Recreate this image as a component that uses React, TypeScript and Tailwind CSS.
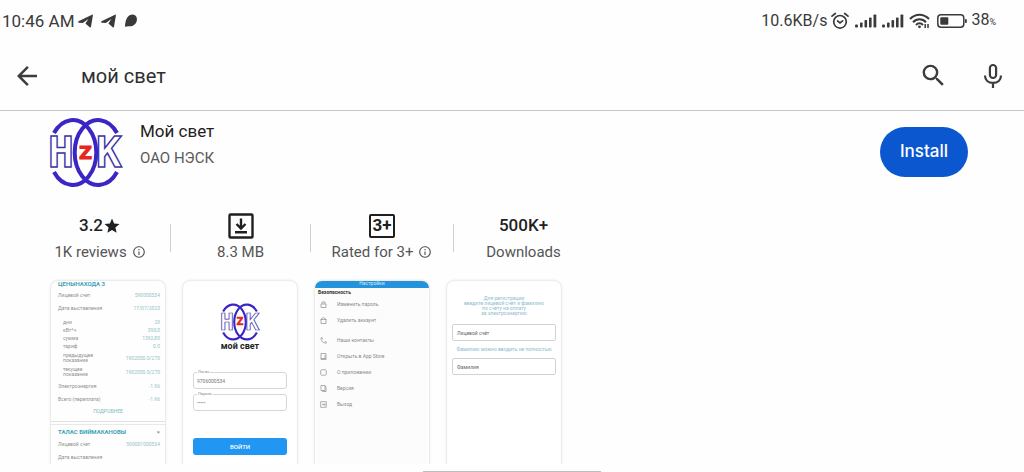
import React from "react";
import { MdArrowBack, MdInfoOutline, MdSearch, MdStar } from "react-icons/md";

function Logo({ className }: { className: string }) {
  return (
    <svg viewBox="0 0 71 71" className={`overflow-visible ${className}`} role="img" aria-label="НЭСК">
      <g fill="#fff" stroke="#3b32a8" strokeWidth="1.4" fontFamily="'DejaVu Sans Mono', monospace" fontWeight="700" fontSize="43">
        <text x="-2" y="50">H</text>
        <text x="46" y="50">K</text>
      </g>
      <g fill="none" stroke="#3b25c4" strokeWidth="4">
        <path d="M4 16A23.5 32.5 0 1 1 4 55" />
        <path d="M67 16A23.5 32.5 0 1 0 67 55" />
      </g>
      <text x="35.5" y="41.5" textAnchor="middle" fill="#e5261f" stroke="#e5261f" strokeWidth="1" fontFamily="'DejaVu Sans', sans-serif" fontWeight="700" fontSize="18">Z</text>
    </svg>
  );
}

function Plane() {
  return (
    <svg viewBox="0 0 15 14" className="h-[14px] w-[15px]" fill="#3a3a3a" aria-hidden="true">
      <path d="M0.200 8.200C0 7.600.3 7.300 1 7L14 .7c.7-.3 1 .1.9.8L13 12.800c-.2.800-.7 1-1.300.5L7.400 9.600l3-4.600-5.600 4-3.900-.3c-.4 0-.6-.2-.7-.5z" />
    </svg>
  );
}

function Signal() {
  return (
    <svg viewBox="0 0 22 14" className="h-[14px] w-[22px]" fill="#3a3a3a" aria-hidden="true">
      <rect x="0" y="10.500" width="3" height="3" rx="1" />
      <rect x="5" y="8.500" width="2.600" height="5" rx=".8" />
      <rect x="9.500" y="6" width="2.600" height="7.500" rx=".8" />
      <rect x="14" y="3.500" width="2.600" height="10" rx=".8" />
      <rect x="18.500" y=".5" width="2.800" height="13" rx=".8" />
    </svg>
  );
}

function StatusBar() {
  return (
    <div className="flex h-[41px] items-center justify-between pr-7 pl-[2px] text-[17px] leading-5 text-[#3a3a3a]">
      <div className="flex items-center">
        <span>10:46 AM</span>
        <span className="ml-1 flex items-center gap-2">
          <Plane />
          <Plane />
          <svg viewBox="0 0 14 14" className="h-[14px] w-[14px]" fill="#3a3a3a" aria-hidden="true">
            <path d="M1 12.500C1.300 7 3 1 8 .6c4-.2 5.500 3 4.800 6.200C12 10.800 8 13 4.500 12.200 3 12 2 13.200 1 12.500z" />
          </svg>
        </span>
      </div>
      <div className="flex items-center">
        <span className="text-[16px]">10.6KB/s</span>
        <svg viewBox="0 0 18 18" className="ml-1 h-[18px] w-[18px]" fill="none" stroke="#3a3a3a" strokeWidth="1.700" strokeLinecap="round" aria-hidden="true">
          <circle cx="9" cy="9.800" r="6.300" />
          <path d="M1 4.200 4.300 1.500M17 4.200 13.700 1.500M6.600 9l2.400 2 2.600-2.200" />
        </svg>
        <span className="ml-[6px] flex gap-[5px]">
          <Signal />
          <Signal />
        </span>
        <svg viewBox="0 0 21 16" className="ml-[5px] h-4 w-[21px]" fill="none" stroke="#3a3a3a" strokeWidth="2" aria-hidden="true">
          <path d="M1 6C6.500.2 14.500.2 20 6M4 9.200c3.800-4 9.200-4 13 0M7 12c2-2.200 5-2.200 7 0" />
          <circle cx="10.500" cy="13.800" r="1.400" fill="#3a3a3a" stroke="none" />
          <path d="M16.200 11v4M19 11v4" strokeWidth="1.500" />
        </svg>
        <svg viewBox="0 0 30 14" className="ml-[7px] h-[14px] w-[30px]" aria-hidden="true">
          <rect x=".8" y=".8" width="26" height="12.400" rx="3.200" fill="none" stroke="#3a3a3a" strokeWidth="1.500" />
          <rect x="3.300" y="3.300" width="8" height="7.400" rx="1" fill="#3a3a3a" />
          <rect x="28" y="5" width="1.800" height="4" rx=".8" fill="#3a3a3a" />
        </svg>
        <span className="ml-1 flex items-baseline text-[16px]">
          38<span className="text-[9px]">%</span>
        </span>
      </div>
    </div>
  );
}

function SearchBar() {
  return (
    <header className="flex h-[70px] items-center border-b border-[#c8c8c8] pl-3 pr-[18px] text-[#3c3c3c]">
      <button aria-label="Back" className="shrink-0">
        <MdArrowBack size={30} />
      </button>
      <input
        aria-label="Search apps"
        defaultValue="мой свет"
        className="ml-[39px] min-w-0 flex-1 bg-transparent text-[20px] leading-6 text-[#2f2f2f] outline-none"
      />
      <button aria-label="Search" className="shrink-0">
        <MdSearch size={29} />
      </button>
      <button aria-label="Voice search" className="ml-8 shrink-0">
        <svg viewBox="0 0 26 26" className="h-[26px] w-[26px]" fill="none" stroke="#3c3c3c" strokeWidth="2.200">
          <rect x="9.900" y="2" width="6.200" height="13" rx="3.100" />
          <path d="M5 12.500c0 4.600 3.400 7.400 8 7.400s8-2.800 8-7.400M13 20v5" />
        </svg>
      </button>
    </header>
  );
}

function Stat({ top, label, info, className }: { top: React.ReactNode; label: string; info?: boolean; className: string }) {
  return (
    <li className={`flex flex-col items-center ${className}`}>
      <div className="flex h-7 items-center text-[17px] font-medium text-[#1f1f1f]">{top}</div>
      <div className="flex h-6 items-center gap-[5px] text-[15px] text-[#555]">
        {label}
        {info && <MdInfoOutline size={14} aria-label="More information" />}
      </div>
    </li>
  );
}

function Stats() {
  return (
    <ul className="ml-[30px] flex">
      <Stat className="w-[140px]" top={<>3.2<MdStar size={18} aria-hidden="true" /></>} label="1K reviews" info />
      <li aria-hidden="true" className="mt-3 h-7 w-px bg-[#cfcfcf]" />
      <Stat
        className="w-[139px]"
        top={
          <svg viewBox="0 0 26 26" className="h-[26px] w-[26px]" fill="none" stroke="#1f1f1f" strokeWidth="2.400" aria-hidden="true">
            <rect x="1.500" y="1.500" width="23" height="23" rx="1" />
            <path d="M13 5.500v9.500M8.500 11l4.500 4.500 4.500-4.500M7 19.300h12" />
          </svg>
        }
        label="8.3 MB"
      />
      <li aria-hidden="true" className="mt-3 h-7 w-px bg-[#cfcfcf]" />
      <Stat
        className="w-[142px]"
        top={<span className="flex h-6 w-[26px] items-center justify-center rounded-[2px] border-2 border-[#1f1f1f] font-bold">3+</span>}
        label="Rated for 3+"
        info
      />
      <li aria-hidden="true" className="mt-3 h-7 w-px bg-[#cfcfcf]" />
      <Stat className="w-[139px]" top="500K+" label="Downloads" />
    </ul>
  );
}

function Shot({ children, className = "" }: { children: React.ReactNode; className?: string }) {
  return (
    <article className={`h-[200px] w-[114px] shrink-0 overflow-hidden rounded-[7px] text-[5px] leading-[5px] shadow-[0_0_3px_rgba(0,0,0,0.2)] ${className}`}>
      {children}
    </article>
  );
}

function Line({ label, value, className = "h-[13px] pl-[7px]" }: { label: string; value: string; className?: string }) {
  return (
    <div className={`flex items-center justify-between pr-[5px] ${className}`}>
      <span>{label}</span>
      <span className="text-[#93c3c3]">{value}</span>
    </div>
  );
}

function BillShot() {
  const sub = "h-2 pl-3";
  const tall = "h-[14px] pl-3";
  return (
    <Shot className="text-[#909090]">
      <h3 className="h-2 pl-[7px] text-[6px] font-bold text-[#3fa3b5]">ЦЕНЫНАХОДА 3</h3>
      <Line label="Лицевой счет" value="590000534" />
      <Line label="Дата выставления" value="17/07/2023" />
      <div className="pt-[3px] pb-px">
        <Line className={sub} label="дни" value="29" />
        <Line className={sub} label="кВт*ч" value="390,0" />
        <Line className={sub} label="сумма" value="1392,80" />
        <Line className={sub} label="тариф" value="0.0" />
      </div>
      <div className="pb-px [&_span:first-child]:w-[32px]">
        <Line className={tall} label="предыдущее показание" value="1902050.0/270" />
        <Line className={tall} label="текущее показание" value="1902050.0/270" />
      </div>
      <Line label="Электроэнергия" value="-1.96" />
      <Line label="Всего (переплата)" value="-1.96" />
      <div className="flex h-4 justify-center border-b border-[#e2e2e2] pt-[3px] text-[#7bbcc4]">ПОДРОБНЕЕ</div>
      <div className="mt-[2px] border-t border-[#e8e8e8]">
        <div className="flex h-[13px] items-center justify-between pr-[5px] pl-[7px] text-[6px] font-bold text-[#3fa3b5]">
          ТАЛАС БИЙМАКАНОВЫ <span className="font-normal text-[#777]">×</span>
        </div>
        <Line label="Лицевой счет" value="590001000534" />
        <Line label="Дата выставления" value="" />
      </div>
    </Shot>
  );
}

function LoginField({ label, value, type }: { label: string; value: string; type: string }) {
  return (
    <label className="relative block">
      <span className="absolute -top-[2px] left-1 bg-white px-px text-[4px] leading-[4px]">{label}</span>
      <input type={type} defaultValue={value} className="block h-[17px] w-full rounded-[3px] border border-[#d6d6d6] px-[3px] text-[5px] text-[#777] outline-none" />
    </label>
  );
}

function LoginShot() {
  return (
    <Shot className="bg-white text-[#888]">
      <div className="flex flex-col items-center pt-[22px]">
        <Logo className="h-[38px] w-[38px]" />
        <h3 className="text-[9px] leading-[10px] font-bold text-[#222]">мой свет</h3>
      </div>
      <div className="mx-[10px] mt-[21px] flex flex-col gap-[5px]">
        <LoginField label="Логин" value="9706000534" type="text" />
        <LoginField label="Пароль" value="12345" type="password" />
        <button className="mt-[22px] h-[17px] rounded-[3px] bg-[#2196f3] text-[6px] font-medium text-white">ВОЙТИ</button>
      </div>
    </Shot>
  );
}

const glyphs = {
  lock: "M1 3h5v3.500H1zM2 3V1h3v2",
  trash: "M1 2.500h5V6.500H1zM.5 2.500 3.500.5l3 2",
  phone: "M1 .8C1 4 3 6 6.200 6.200V4.800L5 4.400M1 .8h1.200L2.600 2",
  phoneApp: "M1 .5h5v6H1zM5 2v3M1 5.500h5",
  about: "M1.500.8h4l.8.700v4l-.8.700h-4L.7 5.500v-4z",
  version: "M1 .5h4v5H1zM2.500 5.500v1H6v-5H5",
  exit: "M.7.7h5.600v5.600H.7zM2 3.500h3M4 2.300l1.200 1.200L4 4.700",
};

function MenuLine({ glyph, text }: { glyph: keyof typeof glyphs; text: string }) {
  return (
    <li className="flex h-[16px] items-center gap-[10px] pl-[5px]">
      <svg viewBox="0 0 7 7" className="h-[7px] w-[7px]" fill="none" stroke="#999" strokeWidth=".8" aria-hidden="true">
        <path d={glyphs[glyph]} />
      </svg>
      {text}
    </li>
  );
}

function SettingsShot() {
  return (
    <Shot className="bg-[#fcfcfc] text-[#8a8a8a]">
      <div className="h-[7px] bg-[#2592dc] text-center leading-[5px] text-[#d5ecfb]">Настройки</div>
      <h3 className="mt-[2px] pl-[3px] font-bold text-[#333]">Безопасность</h3>
      <ul className="mt-px">
        <MenuLine glyph="lock" text="Изменить пароль" />
        <MenuLine glyph="trash" text="Удалить аккаунт" />
      </ul>
      <ul className="mt-1">
        <MenuLine glyph="phone" text="Наши контакты" />
        <MenuLine glyph="phoneApp" text="Открыть в App Store" />
        <MenuLine glyph="about" text="О приложении" />
        <MenuLine glyph="version" text="Версия" />
        <MenuLine glyph="exit" text="Выход" />
      </ul>
    </Shot>
  );
}

function RegisterShot() {
  const field = "block h-[17px] w-full rounded-[2px] border border-[#d2d2d2] px-1 text-[5px] text-[#666] outline-none";
  return (
    <Shot className="bg-white px-[5px] text-center text-[#8cbccc]">
      <p className="pt-[15px]">
        Для регистрации
        <br />
        введите лицевой счёт и фамилию
        <br />
        по счёту на оплату
        <br />
        за электроэнергию
      </p>
      <div className="mt-2">
        <input aria-label="Лицевой счёт" defaultValue="Лицевой счёт" className={field} />
        <p className="py-[6px]">Фамилию можно вводить не полностью</p>
        <input aria-label="Фамилия" defaultValue="Фамилия" className={field} />
      </div>
    </Shot>
  );
}

export default function App() {
  return (
    <div className="bg-[#fefefe] font-['Roboto',sans-serif]">
      <StatusBar />
      <SearchBar />
      <main>
        <section className="flex items-start pt-[6px] pr-14 pl-[50px]">
          <Logo className="h-[71px] w-[71px] shrink-0" />
          <div className="ml-[19px] flex-1 pt-[2px]">
            <h1 className="text-[17px] leading-6 text-[#222]">Мой свет</h1>
            <p className="pt-[3px] text-[15px] leading-6 text-[#5a5a5a]">ОАО НЭСК</p>
          </div>
          <button className="mt-[10px] h-[50px] rounded-full bg-[#0b57d0] px-5 font-['Inter',sans-serif] text-[17px] font-medium text-white">Install</button>
        </section>
        <div className="pt-6">
          <Stats />
        </div>
        <div className="mt-[14px] flex h-[186px] gap-[18px] overflow-hidden pt-[3px] pl-[51px]">
          <BillShot />
          <LoginShot />
          <SettingsShot />
          <RegisterShot />
        </div>
      </main>
      <div className="mx-auto mt-[7px] -mb-px h-[2px] w-[178px] bg-[#bdbdbd]" />
    </div>
  );
}
